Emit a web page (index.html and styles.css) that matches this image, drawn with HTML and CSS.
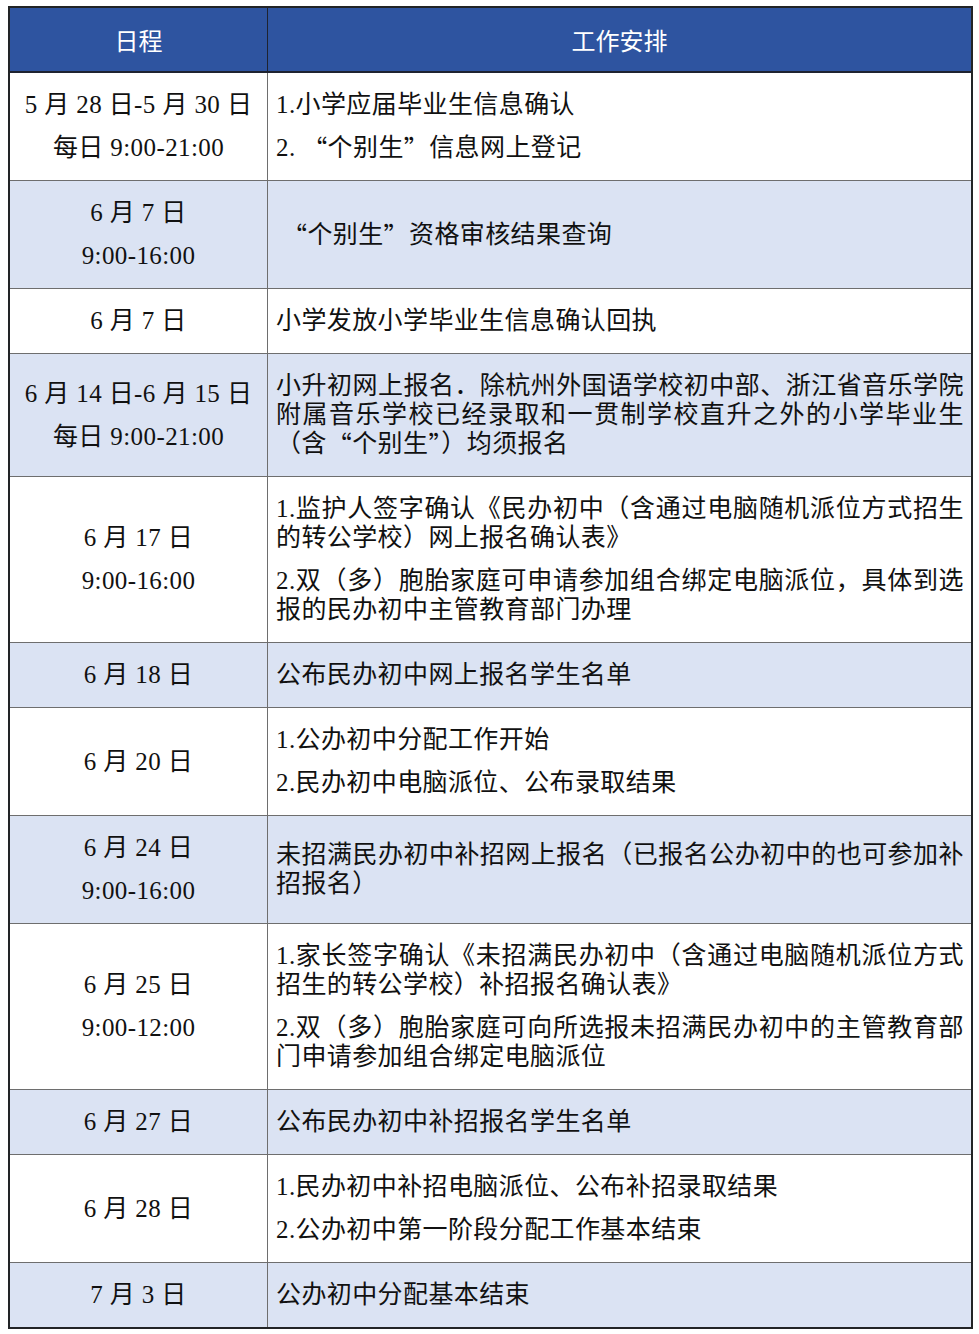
FILE: index.html
```html
<!DOCTYPE html>
<html lang="zh-CN">
<head>
<meta charset="utf-8">
<title>日程</title>
<link rel="stylesheet" href="styles.css">
</head>
<body>
<table class="schedule">
  <thead>
    <tr><th class="col-date">日程</th><th class="col-task">工作安排</th></tr>
  </thead>
  <tbody>
    <tr>
      <td class="date"><p>5 月 28 日-5 月 30 日</p><p>每日 9:00-21:00</p></td>
      <td class="task"><p>1.小学应届毕业生信息确认</p><p>2. <span class="cjk">“</span>个别生<span class="cjk">”</span>信息网上登记</p></td>
    </tr>
    <tr class="alt">
      <td class="date"><p>6 月 7 日</p><p>9:00-16:00</p></td>
      <td class="task"><p><span class="cjk">&nbsp;“</span>个别生<span class="cjk">”</span>资格审核结果查询</p></td>
    </tr>
    <tr>
      <td class="date"><p>6 月 7 日</p></td>
      <td class="task"><p>小学发放小学毕业生信息确认回执</p></td>
    </tr>
    <tr class="alt">
      <td class="date"><p>6 月 14 日-6 月 15 日</p><p>每日 9:00-21:00</p></td>
      <td class="task"><p>小升初网上报名．除杭州外国语学校初中部、浙江省音乐学院附属音乐学校已经录取和一贯制学校直升之外的小学毕业生（含<span class="cjk">“</span>个别生<span class="cjk">”</span>）均须报名</p></td>
    </tr>
    <tr>
      <td class="date"><p>6 月 17 日</p><p>9:00-16:00</p></td>
      <td class="task"><p>1.监护人签字确认《民办初中（含通过电脑随机派位方式招生的转公学校）网上报名确认表》</p><p>2.双（多）胞胎家庭可申请参加组合绑定电脑派位，具体到选报的民办初中主管教育部门办理</p></td>
    </tr>
    <tr class="alt">
      <td class="date"><p>6 月 18 日</p></td>
      <td class="task"><p>公布民办初中网上报名学生名单</p></td>
    </tr>
    <tr>
      <td class="date"><p>6 月 20 日</p></td>
      <td class="task"><p>1.公办初中分配工作开始</p><p>2.民办初中电脑派位、公布录取结果</p></td>
    </tr>
    <tr class="alt">
      <td class="date"><p>6 月 24 日</p><p>9:00-16:00</p></td>
      <td class="task"><p>未招满民办初中补招网上报名（已报名公办初中的也可参加补招报名）</p></td>
    </tr>
    <tr>
      <td class="date"><p>6 月 25 日</p><p>9:00-12:00</p></td>
      <td class="task"><p>1.家长签字确认《未招满民办初中（含通过电脑随机派位方式招生的转公学校）补招报名确认表》</p><p>2.双（多）胞胎家庭可向所选报未招满民办初中的主管教育部门申请参加组合绑定电脑派位</p></td>
    </tr>
    <tr class="alt">
      <td class="date"><p>6 月 27 日</p></td>
      <td class="task"><p>公布民办初中补招报名学生名单</p></td>
    </tr>
    <tr>
      <td class="date"><p>6 月 28 日</p></td>
      <td class="task"><p>1.民办初中补招电脑派位、公布补招录取结果</p><p>2.公办初中第一阶段分配工作基本结束</p></td>
    </tr>
    <tr class="alt">
      <td class="date"><p>7 月 3 日</p></td>
      <td class="task"><p>公办初中分配基本结束</p></td>
    </tr>
  </tbody>
</table>
</body>
</html>
```

FILE: styles.css
```css
html, body {
  margin: 0;
  padding: 0;
  background: #ffffff;
}

.schedule {
  margin: 6px 0 0 8px;
  width: 965px;
  table-layout: fixed;
  border-collapse: separate;
  border-spacing: 0;
  border: 2px solid #222426;
  font-family: "Liberation Serif", "Noto Sans CJK SC", serif;
  font-size: 25px;
  color: #111111;
}

.cjk {
  font-family: "Noto Sans CJK SC", sans-serif;
  line-height: 29px;
  vertical-align: top;
}

.schedule th {
  background: #2e54a0;
  color: #ffffff;
  font-family: "Noto Sans CJK SC", sans-serif;
  font-weight: normal;
  font-size: 24px;
  line-height: 29px;
  height: 65px;
  padding: 0;
  box-sizing: border-box;
  text-align: center;
  vertical-align: middle;
  border-bottom: 2px solid #1e2330;
}

.schedule th.col-date {
  width: 258px;
  border-right: 1px solid #1e2330;
}

.schedule td {
  padding: 17px 7px 18px 8px;
  line-height: 29px;
  vertical-align: middle;
  border-top: 1px solid #6e6e6e;
  background: #ffffff;
}

.schedule tbody tr:first-child td {
  border-top: none;
}

.schedule tr.alt td {
  background: #dbe3f3;
}

.schedule td.date {
  text-align: center;
  border-right: 1px solid #6e6e6e;
  padding-left: 4px;
  padding-right: 4px;
  letter-spacing: 0.4px;
}

.schedule td.task {
  text-align: justify;
  letter-spacing: 0.4px;
}

.schedule p {
  margin: 0;
}

.schedule p + p {
  margin-top: 14px;
}
```
